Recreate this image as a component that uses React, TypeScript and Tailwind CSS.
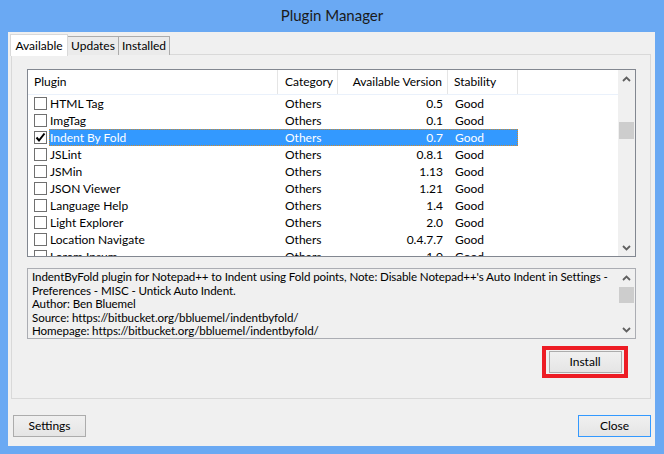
import React from "react";

const plugins = [
  { name: "HTML Tag", cat: "Others", ver: "0.5", stab: "Good" },
  { name: "ImgTag", cat: "Others", ver: "0.1", stab: "Good" },
  { name: "Indent By Fold", cat: "Others", ver: "0.7", stab: "Good", checked: true, selected: true },
  { name: "JSLint", cat: "Others", ver: "0.8.1", stab: "Good" },
  { name: "JSMin", cat: "Others", ver: "1.13", stab: "Good" },
  { name: "JSON Viewer", cat: "Others", ver: "1.21", stab: "Good" },
  { name: "Language Help", cat: "Others", ver: "1.4", stab: "Good" },
  { name: "Light Explorer", cat: "Others", ver: "2.0", stab: "Good" },
  { name: "Location Navigate", cat: "Others", ver: "0.4.7.7", stab: "Good" },
  { name: "Lorem Ipsum", cat: "Others", ver: "1.0", stab: "Good" },
];

function Chevron({ up }: { up?: boolean }) {
  return (
    <svg width="9" height="6" viewBox="0 0 9 6" className="block">
      <path
        d={up ? "M1 5 L4.5 1.5 L8 5" : "M1 1 L4.5 4.5 L8 1"}
        fill="none"
        stroke="#606060"
        strokeWidth="1.8"
      />
    </svg>
  );
}

function ScrollBar({ thumbTop, thumbHeight }: { thumbTop: number; thumbHeight: number }) {
  return (
    <div className="w-[17px] h-full bg-[#f0f0f0] flex flex-col relative shrink-0">
      <div className="h-[17px] flex items-center justify-center">
        <Chevron up />
      </div>
      <div className="flex-1" />
      <div className="h-[17px] flex items-center justify-center">
        <Chevron />
      </div>
      <div
        className="absolute left-[1px] right-[1px] bg-[#cdcdcd]"
        style={{ top: thumbTop, height: thumbHeight }}
      />
    </div>
  );
}

function Checkbox({ checked }: { checked?: boolean }) {
  return (
    <div className="w-[13px] h-[13px] border border-[#707070] bg-white flex items-center justify-center">
      {checked && (
        <svg width="11" height="11" viewBox="0 0 11 11">
          <path d="M1.5 5.5 L4 8.5 L9.5 1.5" fill="none" stroke="#000" strokeWidth="2" />
        </svg>
      )}
    </div>
  );
}

function WinButton({ label, isDefault }: { label: string; isDefault?: boolean }) {
  return (
    <div
      className={
        "w-[73px] h-[22px] flex items-center justify-center text-[12px] text-black bg-gradient-to-b from-[#f0f0f0] to-[#e5e5e5] border " +
        (isDefault ? "border-[#3399ff]" : "border-[#acacac]")
      }
    >
      {label}
    </div>
  );
}

export default function App() {
  return (
    <div
      className="w-[664px] h-[454px] bg-[#6aa9f3] flex flex-col"
      style={{ fontFamily: "'Segoe UI', Lato, 'Liberation Sans', sans-serif" }}
    >
      {/* title bar */}
      <div className="h-[32px] flex items-center justify-center text-[15px] text-[#1a1a1a] pb-[1px]">
        Plugin Manager
      </div>

      {/* client area */}
      <div className="flex-1 ml-[8px] mr-[9px] mb-[8px] bg-[#f0f0f0] flex flex-col text-[12px] text-black">
        {/* tabs */}
        <div className="flex items-end h-[22px] pl-[2px] mt-[2px] relative z-10">
          <div className="w-[58px] h-[22px] bg-white border border-b-0 border-[#d9d9d9] flex items-start justify-center pt-[2px]">
            Available
          </div>
          <div className="w-[51px] h-[19px] bg-[#ebebeb] border border-b-0 border-l-0 border-[#acacac] flex items-center justify-center mb-[1px]">
            Updates
          </div>
          <div className="w-[51px] h-[19px] bg-[#ebebeb] border border-b-0 border-l-0 border-[#acacac] flex items-center justify-center mb-[1px]">
            Installed
          </div>
        </div>

        {/* tab panel */}
        <div className="ml-[3px] w-[640px] h-[345px] -mt-[2px] border border-[#d9d9d9] bg-[#f0f0f0] flex flex-col pt-[14px] pl-[15px]">
          {/* list view */}
          <div className="w-[609px] h-[188px] border border-[#828790] bg-white flex">
            <div className="flex-1 flex flex-col overflow-hidden">
              <div className="h-[25px] flex items-center border-b border-[#eaf1fb] shrink-0">
                <div className="w-[250px] h-full flex items-center pl-[6px] border-r border-[#e5e5e5]">Plugin</div>
                <div className="w-[60px] h-full flex items-center pl-[7px] border-r border-[#e5e5e5]">Category</div>
                <div className="w-[110px] h-full flex items-center justify-end pr-[5px] border-r border-[#e5e5e5]">Available Version</div>
                <div className="w-[70px] h-full flex items-center pl-[6px] border-r border-[#e5e5e5]">Stability</div>
              </div>
              {plugins.map((p) => (
                <div key={p.name} className="h-[17px] flex items-center shrink-0">
                  <div className="w-[21px] h-full flex items-center pl-[6px]">
                    <Checkbox checked={p.checked} />
                  </div>
                  <div
                    className={
                      "w-[469px] h-full flex items-center " +
                      (p.selected
                        ? "bg-[#3399ff] text-white outline-1 outline-dotted outline-[#d08a2c] -outline-offset-1"
                        : "")
                    }
                  >
                    <div className="w-[229px] pl-[1px]">{p.name}</div>
                    <div className="w-[60px] pl-[7px]">{p.cat}</div>
                    <div className="w-[110px] text-right pr-[5px]">{p.ver}</div>
                    <div className="w-[70px] pl-[7px]">{p.stab}</div>
                  </div>
                </div>
              ))}
            </div>
            <ScrollBar thumbTop={52} thumbHeight={17} />
          </div>

          {/* description */}
          <div className="w-[609px] h-[71px] mt-[11px] border border-[#abadb3] bg-[#f0f0f0] flex">
            <div className="flex-1 min-w-0 overflow-hidden whitespace-nowrap pl-[4px] pt-[1px] leading-[13.5px] text-[11.6px] tracking-[-0.1px]">
              <div>IndentByFold plugin for Notepad++ to Indent using Fold points, Note: Disable Notepad++'s Auto Indent in Settings -</div>
              <div>Preferences - MISC - Untick Auto Indent.</div>
              <div>Author: Ben Bluemel</div>
              <div>Source: https://bitbucket.org/bbluemel/indentbyfold/</div>
              <div>Homepage: https://bitbucket.org/bbluemel/indentbyfold/</div>
            </div>
            <ScrollBar thumbTop={18} thumbHeight={16} />
          </div>

          {/* install */}
          <div className="w-[609px] flex justify-end mt-[7px] pr-[8px]">
            <div className="w-[86px] h-[32px] border-[4px] border-[#ed1c24] flex items-center justify-center">
              <WinButton label="Install" />
            </div>
          </div>
        </div>

        {/* bottom buttons */}
        <div className="flex justify-between mt-[16px] pl-[5px] pr-[4px]">
          <WinButton label="Settings" />
          <WinButton label="Close" isDefault />
        </div>
      </div>
    </div>
  );
}
